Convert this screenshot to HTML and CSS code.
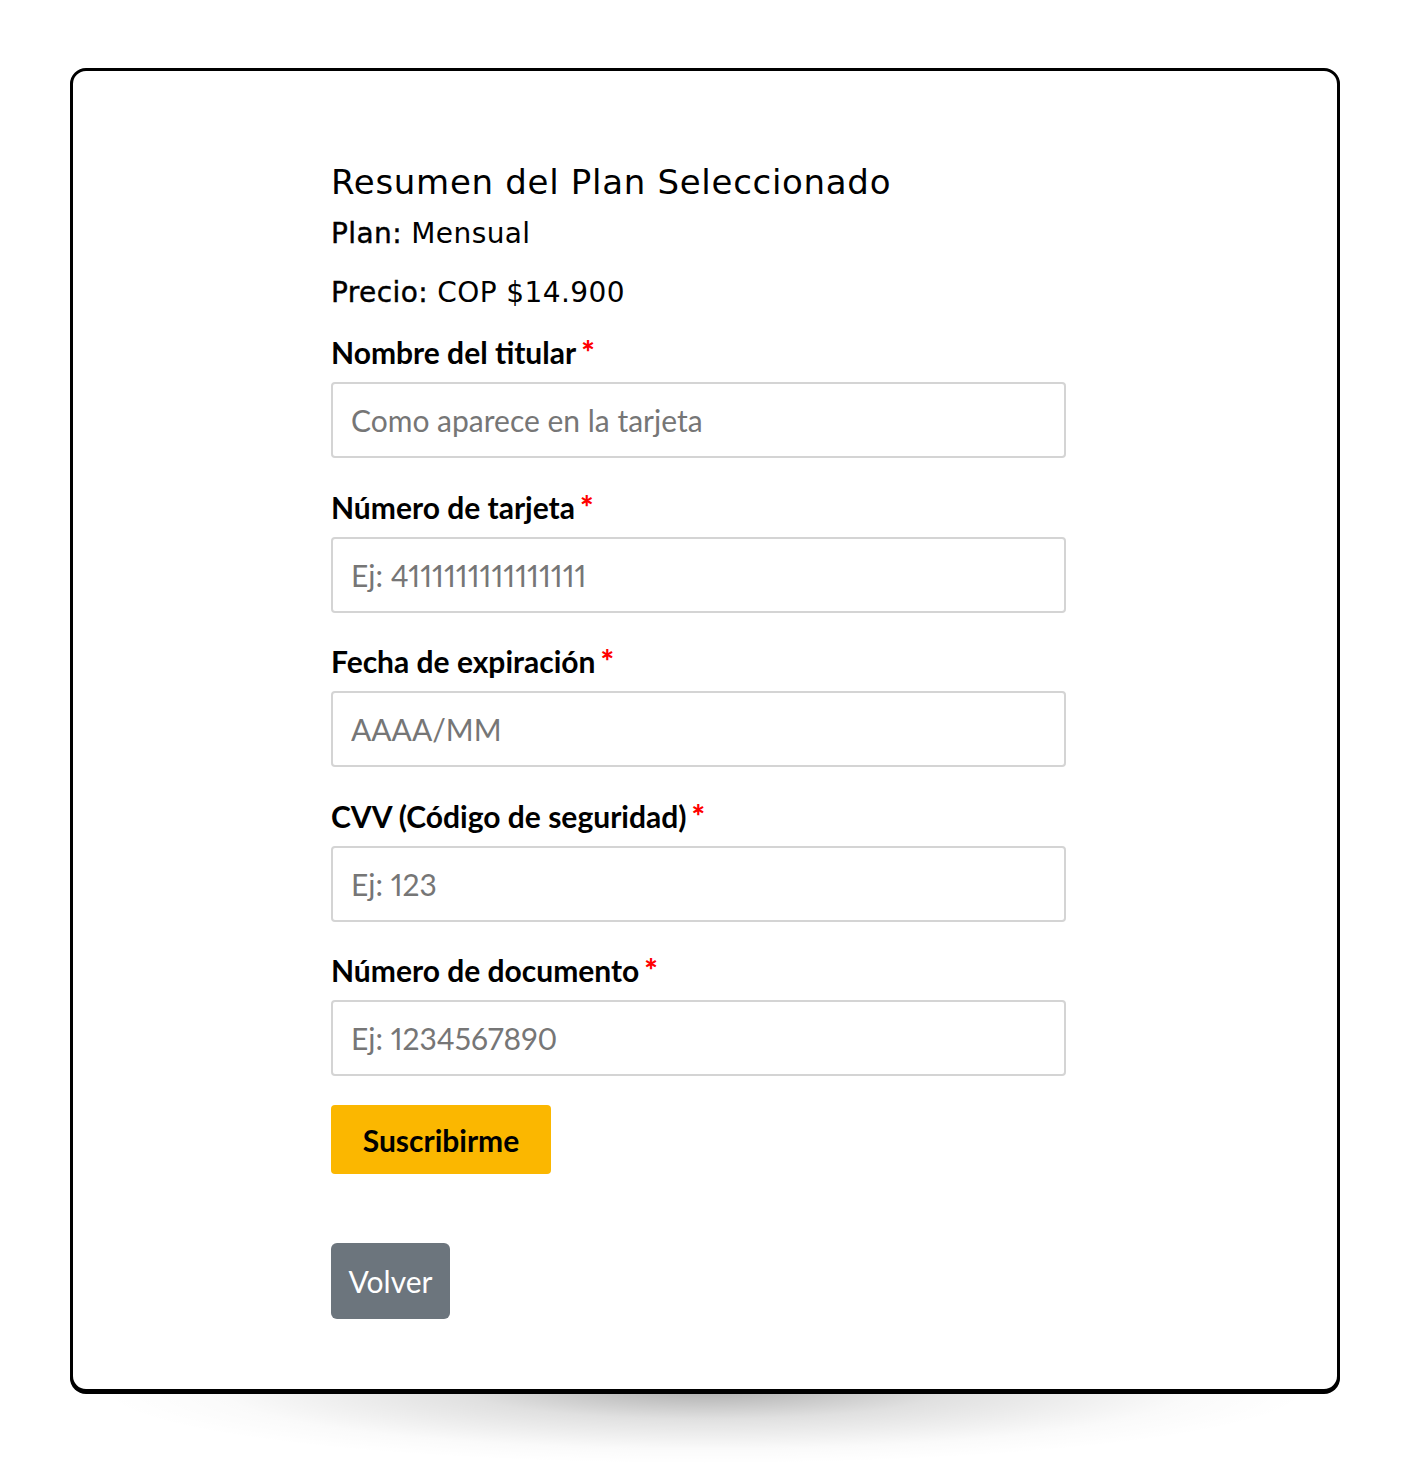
FILE: index.html
```html
<!DOCTYPE html>
<html lang="es">
<head>
  <meta charset="UTF-8">
  <meta name="viewport" content="width=device-width, initial-scale=1.0">
  <title>Suscripción</title>
  <link rel="stylesheet" href="styles.css">
</head>
<body>
  <main class="page">
    <div class="card">
      <div class="checkout">
        <h2>Resumen del Plan Seleccionado</h2>
        <p class="summary"><span class="key">Plan:</span> Mensual</p>
        <p class="summary"><span class="key">Precio:</span> COP $14.900</p>
        <form id="payment-form">
          <div class="field">
            <label for="holder">Nombre del titular<span class="req">*</span></label>
            <input type="text" id="holder" name="holder" placeholder="Como aparece en la tarjeta">
          </div>
          <div class="field">
            <label for="card">Número de tarjeta<span class="req">*</span></label>
            <input type="text" id="card" name="card" placeholder="Ej: 4111111111111111">
          </div>
          <div class="field">
            <label for="expiry">Fecha de expiración<span class="req">*</span></label>
            <input type="text" id="expiry" name="expiry" placeholder="AAAA/MM">
          </div>
          <div class="field">
            <label for="cvv">CVV (Código de seguridad)<span class="req">*</span></label>
            <input type="text" id="cvv" name="cvv" placeholder="Ej: 123">
          </div>
          <div class="field">
            <label for="doc">Número de documento<span class="req">*</span></label>
            <input type="text" id="doc" name="doc" placeholder="Ej: 1234567890">
          </div>
          <button type="submit" class="btn-primary">Suscribirme</button>
        </form>
        <button type="button" class="btn-back">Volver</button>
      </div>
    </div>
  </main>
</body>
</html>
```

FILE: styles.css
```css
body{
  margin: 0;
  background: white;
  font-family: Lato, sans-serif;
  color: #000;
}

.page{
  padding: 68px 70px 87px;
}

.card{
  position: relative;
  border: 3px solid #000;
  border-radius: 16px;
  box-shadow: 0 2px 0 #000;
  background: white;
  padding: 91px 0 70px 258px;
}

/* soft shadow under the card */
.card::after{
  content: "";
  position: absolute;
  left: 2%;
  right: 2%;
  top: 100%;
  height: 75px;
  background: radial-gradient(ellipse 50% 100% at 50% 0%, rgba(0,0,0,.32) 0%, rgba(0,0,0,.12) 40%, rgba(0,0,0,.02) 80%, rgba(0,0,0,0) 100%);
  z-index: -1;
}

.checkout{
  width: 735px;
}

h2{
  font-family: 'DejaVu Sans', sans-serif;
  font-weight: normal;
  font-size: 34px;
  line-height: 40px;
  margin: 0 0 15px;
  letter-spacing: 0.7px;
}

.summary{
  font-family: 'DejaVu Sans', sans-serif;
  font-size: 28px;
  line-height: 34px;
  margin: 0 0 25px;
  letter-spacing: 0.4px;
}

.key{
  -webkit-text-stroke: 0.4px #000;
}

form{
  display: flex;
  flex-direction: column;
}

.field{
  display: flex;
  flex-direction: column;
  gap: 13px;
  margin-bottom: 31.5px;
}

.field:last-of-type{
  margin-bottom: 29px;
}

label{
  font-weight: bold;
  font-size: 30px;
  line-height: 34px;
  height: 34px;
}

.req{
  color: #f00;
  margin-left: 5px;
  font-size: 32px;
  font-weight: 900;
  line-height: 0;
}

input{
  box-sizing: border-box;
  height: 76px;
  border: 2px solid #d4d4d4;
  border-radius: 4px;
  padding: 0 18px;
  font-family: Lato, sans-serif;
  font-size: 30px;
  font-variant-numeric: proportional-nums;
  color: #333;
}

input::placeholder{
  color: #767676;
}

button{
  border: unset;
  border-radius: 4px;
  font-family: Lato, sans-serif;
  cursor: pointer;
}

.btn-primary{
  align-self: flex-start;
  width: 220px;
  height: 69px;
  background-color: #fbb700;
  color: #000;
  font-weight: bold;
  font-size: 30px;
}

.btn-back{
  margin-top: 69px;
  width: 119px;
  height: 76px;
  background-color: #6c757d;
  color: white;
  font-size: 30px;
  border-radius: 6px;
}
```
